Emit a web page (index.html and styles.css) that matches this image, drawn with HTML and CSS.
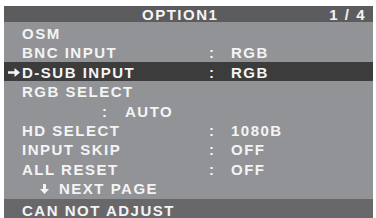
FILE: index.html
```html
<!DOCTYPE html>
<html>
<head>
    <meta charset="utf-8">
    <title>OPTION1</title>
    <link rel="stylesheet" href="styles.css">
</head>
<body>
<section class="osd">
    <div class="osd_title">
        <span class="osd_name">OPTION1</span>
        <span class="osd_page">1 / 4</span>
    </div>
    <ul class="osd_list">
        <li class="row"><span class="mark"></span><span class="label">OSM</span></li>
        <li class="row"><span class="mark"></span><span class="label">BNC INPUT</span><span class="colon">:</span><span class="value">RGB</span></li>
        <li class="row current">
            <span class="mark">
                <svg width="12" height="9" viewBox="0 0 12 9"><path d="M0 3.3H6.5V0L12 4.5 6.5 9V5.7H0z" fill="#f4f4f4"/></svg>
            </span>
            <span class="label">D-SUB INPUT</span><span class="colon">:</span><span class="value">RGB</span>
        </li>
        <li class="row"><span class="mark"></span><span class="label">RGB SELECT</span></li>
        <li class="row sub"><span class="colon">:</span><span class="value">AUTO</span></li>
        <li class="row"><span class="mark"></span><span class="label">HD SELECT</span><span class="colon">:</span><span class="value">1080B</span></li>
        <li class="row"><span class="mark"></span><span class="label">INPUT SKIP</span><span class="colon">:</span><span class="value">OFF</span></li>
        <li class="row"><span class="mark"></span><span class="label">ALL RESET</span><span class="colon">:</span><span class="value">OFF</span></li>
        <li class="row next">
            <svg width="9" height="10" viewBox="0 0 9 10"><path d="M3 0H6V5H9L4.5 10 0 5H3z" fill="#f4f4f4"/></svg>
            <span class="label">NEXT PAGE</span>
        </li>
    </ul>
    <div class="osd_status">CAN NOT ADJUST</div>
</section>
</body>
</html>
```

FILE: styles.css
```css
body,div,span,ul,li{ margin:0; padding:0 }
ul,li{ list-style:none; }
html,body{ background:#fff; overflow:hidden; }
*{ box-sizing:border-box; }

body{
    font-family:"Liberation Sans", Arial, sans-serif;
    font-weight:bold; font-size:15px; color:#f4f4f4;
    letter-spacing:1.5px; line-height:1;
}

/* OSD 菜单面板 */
.osd{
    width:369px; height:212px; margin:6px 0 0 4px;
    background:#929397;
    display:flex; flex-direction:column;
}
.osd_title{
    height:19px; background:#5c5c5f;
    display:flex; align-items:center;
    padding:1px 7px 0 138px;
}
.osd_name{ flex:1; }

.osd_list{ padding-top:1px; }
.osd_list .row{
    height:19.45px; padding-top:1px;
    display:grid; grid-template-columns:18px 187px 22px 1fr;
    align-items:center;
}
.osd_list .current{ background:#3c3c3d; }
.osd_list .mark{ display:flex; justify-content:center; padding-left:1px; }
.osd_list .mark svg{ display:block; }
/* AUTO 这一行没有标签，冒号往左缩进 */
.osd_list .sub{ grid-template-columns:98px 23px 1fr; }
.osd_list .sub .colon{ grid-column:2; }
.osd_list .next{ display:flex; padding-left:36px; gap:10px; }
.osd_list .next svg{ display:block; }

.osd_status{
    flex:1; margin-top:1px; background:#68686b;
    padding:4px 0 0 18px;
}
```
